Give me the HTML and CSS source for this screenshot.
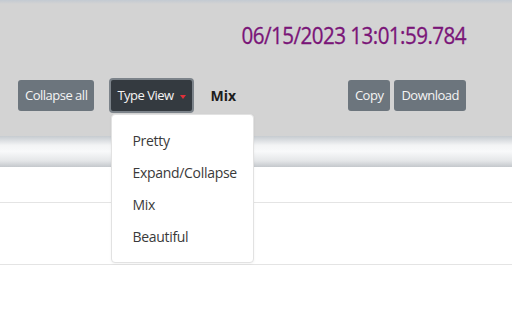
FILE: index.html
```html
<!DOCTYPE html>
<html lang="en">
<head>
  <meta charset="UTF-8">
  <title>JSON Viewer</title>
  <link rel="stylesheet" href="styles.css">
</head>
<body>
  <header class="toolbar">
    <div class="clock">06/15/2023 13:01:59.784</div>
    <div class="actions">
      <button class="btn">Collapse all</button>
      <div class="dropdown">
        <button class="btn btn-dark">Type View <span class="caret"></span></button>
        <ul class="menu">
          <li>Pretty</li>
          <li>Expand/Collapse</li>
          <li>Mix</li>
          <li>Beautiful</li>
        </ul>
      </div>
      <span class="mode">Mix</span>
      <div class="right">
        <button class="btn">Copy</button>
        <button class="btn">Download</button>
      </div>
    </div>
  </header>
  <div class="bar"></div>
  <div class="row"></div>
  <div class="row"></div>
</body>
</html>
```

FILE: styles.css
```css
body {
  margin: 0;
  font-family: 'Open Sans', sans-serif;
  background: #fff;
}

.toolbar {
  background: linear-gradient(#c3cad2, #d3d3d3 4px);
  height: 136px;
  padding: 0 46px 0 18px;
  box-sizing: border-box;
}

.clock {
  text-align: right;
  color: #7a1578;
  font-size: 23px;
  letter-spacing: -0.6px;
  padding-top: 19px;
  height: 58px;
  transform: scaleX(0.895);
  transform-origin: right;
  -webkit-text-stroke: 0.3px #7a1578;
}

.actions {
  display: flex;
  align-items: center;
  height: 36px;
}

.btn {
  background: #6c757d;
  color: #f4f4f4;
  border: none;
  border-radius: 3px;
  font-family: 'Open Sans', sans-serif;
  font-size: 13px;
  letter-spacing: -0.5px;
  height: 31px;
  padding: 0 7px;
}

.btn-dark {
  background: #343a40;
  border: 2px solid #7c838a;
  height: 35px;
  border-radius: 4px;
  padding: 0 6px;
  margin-left: 15px;
}

.caret {
  display: inline-block;
  width: 0;
  height: 0;
  border-left: 3px solid transparent;
  border-right: 3px solid transparent;
  border-top: 4px solid #e0303a;
  vertical-align: middle;
  margin-left: 3px;
}

.dropdown {
  position: relative;
}

.menu {
  position: absolute;
  top: 36px;
  left: 17px;
  width: 143px;
  height: 149px;
  margin: 0;
  padding: 10px 0 0;
  list-style: none;
  background: #fff;
  border: 1px solid #e2e2e2;
  border-radius: 4px;
  box-shadow: 0 1px 3px rgba(0, 0, 0, 0.05);
  box-sizing: border-box;
  z-index: 2;
}

.menu li {
  padding: 4px 0 4px 20px;
  height: 32px;
  line-height: 24px;
  box-sizing: border-box;
  font-size: 14px;
  color: #3a3a3a;
  letter-spacing: -0.3px;
}

.mode {
  font-weight: bold;
  font-size: 14px;
  color: #1d1d1d;
  margin-left: 17px;
}

.right {
  margin-left: auto;
  display: flex;
  gap: 4px;
}

.bar {
  height: 31px;
  background: linear-gradient(#c6cbd0, #f3f4f5 30%, #f8f9fa 50%, #e4e6e8 80%, #c4c8cc);
}

.row {
  height: 35px;
  border-bottom: 1px solid #e4e4e4;
}

.row + .row {
  height: 61px;
}
```
